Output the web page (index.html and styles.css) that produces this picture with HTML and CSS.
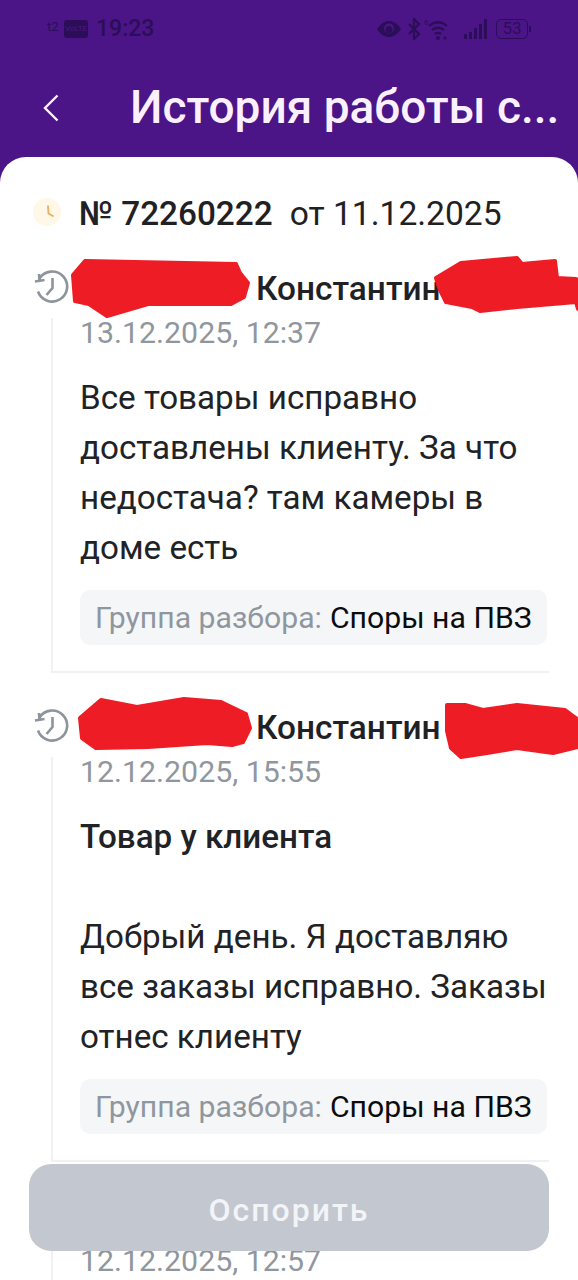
FILE: index.html
```html
<!DOCTYPE html>
<html lang="ru">
<head>
<meta charset="utf-8">
<title>История работы</title>
<link rel="stylesheet" href="styles.css">
</head>
<body>
<div class="screen">
  <header class="header">
    <div class="status">
      <div class="status-left">
        <span class="carrier">t2</span>
        <span class="volte">VoLTE</span>
        <span class="clock">19:23</span>
      </div>
      <div class="status-right">
        <svg class="ic-eye" viewBox="0 0 24 16"><path d="M0 8C4 2 8 0 12 0s8 2 12 8c-4 6-8 8-12 8S4 14 0 8z" fill="#2b0e57"/><circle cx="12" cy="7.500" r="5" fill="#4b1587"/><circle cx="12" cy="8.500" r="3.500" fill="#2b0e57"/></svg>
        <svg class="ic-bt" viewBox="0 0 14 22"><path d="M2 6l10 10-5 5V1l5 5L2 16" fill="none" stroke="#2b0e57" stroke-width="2.200"/></svg>
        <svg class="ic-wifi" viewBox="0 0 28 22"><text x="0" y="7" class="wifi-six">6</text><path d="M5 8c6-5 12-5 18 0M8 12c4-3 8-3 12 0M11 16c2-1.500 4-1.500 6 0" fill="none" stroke="#2b0e57" stroke-width="2.200"/><circle cx="14" cy="20" r="2" fill="#2b0e57"/><circle cx="21" cy="20" r="1.500" fill="#2b0e57"/></svg>
        <svg class="ic-signal" viewBox="0 0 24 20"><path d="M1 15h3v5H1zM6 13h3v7H6zM11 9h3v11h-3zM16 5h3v15h-3zM21 0h3v20h-3z" fill="#2b0e57"/></svg>
        <span class="battery">53</span>
        <span class="battery-tip"></span>
      </div>
    </div>
    <div class="topbar">
      <svg class="back" viewBox="0 0 16 28"><path d="M14.500 1.500L2 14l12.500 12.500" fill="none" stroke="#fbf0ff" stroke-width="2.400"/></svg>
      <h1 class="title">История работы с...</h1>
    </div>
  </header>

  <main class="sheet">
    <div class="order">
      <svg class="order-icon" viewBox="0 0 28 28"><circle cx="14" cy="14" r="14" fill="#fff8e8"/><path d="M15 7.500l.6 8 5 3" fill="none" stroke="#e3b65f" stroke-width="2"/></svg>
      <span class="order-num">№ 72260222</span>
      <span class="order-date">от 11.12.2025</span>
    </div>

    <section class="event">
      <div class="event-head">
        <svg class="hist" viewBox="0 0 36 36"><path d="M6.500 9.500A15 15 0 1 1 5 22.500" fill="none" stroke="#8e949b" stroke-width="2.600"/><path d="M2 12.500l9.500-1.500M6 5l.5 7" fill="none" stroke="#8e949b" stroke-width="2.600"/><path d="M19.500 9v10l-6 7" fill="none" stroke="#8e949b" stroke-width="2.600"/></svg>
        <span class="name">Константин</span>
        <svg class="redact" viewBox="0 0 578 66"><path d="M85 3L236 6 240 15 248 25 244 39 231 46 148 46 107 58 89 46 75 43 73 17z"/><path d="M436 20L461 5 517 0 522 6 555 3 557 20 576 21 578 23 578 51 576 44 517 49 480 53 472 49 446 44 440 32z"/></svg>
      </div>
      <div class="event-body">
        <div class="date">13.12.2025, 12:37</div>
        <p class="text">Все товары исправно<br>доставлены клиенту. За что<br>недостача? там камеры в<br>доме есть</p>
        <div class="tag"><span class="tag-label">Группа разбора:</span> <span class="tag-value">Споры на ПВЗ</span></div>
      </div>
    </section>

    <section class="event">
      <div class="event-head">
        <svg class="hist" viewBox="0 0 36 36"><path d="M6.500 9.500A15 15 0 1 1 5 22.500" fill="none" stroke="#8e949b" stroke-width="2.600"/><path d="M2 12.500l9.500-1.500M6 5l.5 7" fill="none" stroke="#8e949b" stroke-width="2.600"/><path d="M19.500 9v10l-6 7" fill="none" stroke="#8e949b" stroke-width="2.600"/></svg>
        <span class="name">Константин</span>
        <svg class="redact" viewBox="0 0 578 66"><path d="M80 21L101 3 137 10 184 2 221 5 246 17 250 31 243 45 232 48 207 46 148 50 96 51 82 41z"/><path d="M447 8L465 8 483 13 517 8 565 13 577 22 578 25 578 50 553 56 517 51 487 56 461 60 451 51 447 34z"/></svg>
      </div>
      <div class="event-body">
        <div class="date">12.12.2025, 15:55</div>
        <p class="text"><span class="text-strong">Товар у клиента</span><br><br>Добрый день. Я доставляю<br>все заказы исправно. Заказы<br>отнес клиенту</p>
        <div class="tag"><span class="tag-label">Группа разбора:</span> <span class="tag-value">Споры на ПВЗ</span></div>
      </div>
    </section>

    <section class="event">
      <div class="event-head"></div>
      <div class="event-body">
        <div class="date">12.12.2025, 12:57</div>
      </div>
    </section>
  </main>

  <button class="action">Оспорить</button>
</div>
</body>
</html>
```

FILE: styles.css
```css
* { box-sizing: border-box; }
html, body { margin: 0; padding: 0; }
body { font-family: Roboto, "Noto Sans", sans-serif; background: #4b1587; }

.screen {
  position: relative;
  width: 578px;
  height: 1280px;
  overflow: hidden;
  background: #4b1587;
}

.header { height: 157px; }

.status {
  height: 57px;
  display: flex;
  align-items: center;
  justify-content: space-between;
  padding: 0 47px 0 47px;
  color: #2b0e57;
}
.status-left, .status-right { display: flex; align-items: center; }
.carrier { font-size: 13px; width: 17px; margin-top: -4px; }
.volte {
  width: 24px;
  height: 18px;
  border-radius: 3px;
  background: #2b0e57;
  color: #4b1587;
  font-size: 8px;
  line-height: 18px;
  text-align: center;
  margin-right: 8px;
}
.clock { font-size: 23px; line-height: 28px; font-weight: 500; }

.ic-eye { width: 24px; height: 16px; margin-right: 6px; }
.ic-bt { width: 14px; height: 22px; margin-right: 3px; }
.ic-wifi { width: 28px; height: 22px; margin-right: 10px; }
.wifi-six { font-size: 8px; fill: #2b0e57; }
.ic-signal { width: 26px; height: 20px; margin-right: 8px; }
.battery {
  width: 32px;
  height: 20px;
  border: 1.500px solid #2b0e57;
  border-radius: 5px;
  font-size: 17px;
  line-height: 17px;
  text-align: center;
}
.battery-tip { width: 2px; height: 6px; margin-left: 1px; background: #2b0e57; }

.topbar {
  height: 100px;
  display: flex;
  align-items: center;
  padding-left: 43px;
}
.back { width: 16px; height: 28px; margin-right: 71px; margin-top: 2px; }
.title {
  margin: 0;
  font-size: 46px;
  line-height: 52px;
  font-weight: 500;
  color: #fbf0ff;
  white-space: nowrap;
}

.sheet {
  height: 1123px;
  background: #fff;
  border-radius: 26px 26px 0 0;
  padding: 33px 29px 0 33px;
  overflow: hidden;
}

.order {
  height: 46px;
  display: flex;
  align-items: center;
  margin-bottom: 22px;
  color: #1f2124;
  white-space: nowrap;
}
.order-icon { width: 28px; height: 28px; margin-right: 18px; flex: none; margin-top: -2px; }
.order-num { font-size: 33.300px; font-weight: 500; margin-right: 17px; }
.order-date { font-size: 33.600px; }

.event { margin-bottom: 24px; }
.event-head {
  position: relative;
  height: 60px;
  display: flex;
  align-items: center;
}
.hist { width: 36px; height: 36px; flex: none; margin-top: -2px; }
.name {
  margin-left: 187px;
  font-size: 33.400px;
  font-weight: 500;
  color: #1f2124;
  white-space: nowrap;
}
.redact {
  position: absolute;
  left: -33px;
  top: 0;
  width: 578px;
  height: 66px;
  overflow: visible;
}
.redact path {
  fill: #ee1c25;
  stroke: #ee1c25;
  stroke-width: 4px;
  stroke-linejoin: round;
}

.event-body {
  margin-left: 18px;
  padding: 0 0 26px 27px;
  border-left: 2px solid #f0f1f3;
  border-bottom: 2px solid #f0f1f3;
}
.date {
  height: 29px;
  font-size: 30.300px;
  line-height: 29px;
  color: #8f969e;
  white-space: nowrap;
}
.text {
  margin: 26px 0 17px;
  font-size: 33.200px;
  line-height: 50px;
  color: #202225;
  white-space: nowrap;
}
.text-strong { font-weight: 500; }

.tag {
  width: 467px;
  height: 55px;
  padding: 0 15px;
  display: flex;
  align-items: center;
  gap: 8px;
  border-radius: 10px;
  background: #f5f6f8;
  font-size: 30.200px;
  white-space: nowrap;
}
.tag-label { color: #8f969e; }
.tag-value { color: #0c0c0d; }

.action {
  position: absolute;
  left: 29px;
  top: 1164px;
  width: 520px;
  height: 87px;
  border: 0;
  border-radius: 22px;
  background: #c3c7d0;
  color: #f3f4f7;
  font-family: inherit;
  font-size: 32px;
  font-weight: 500;
  letter-spacing: 2px;
  padding: 4px 0 0;
}
```
